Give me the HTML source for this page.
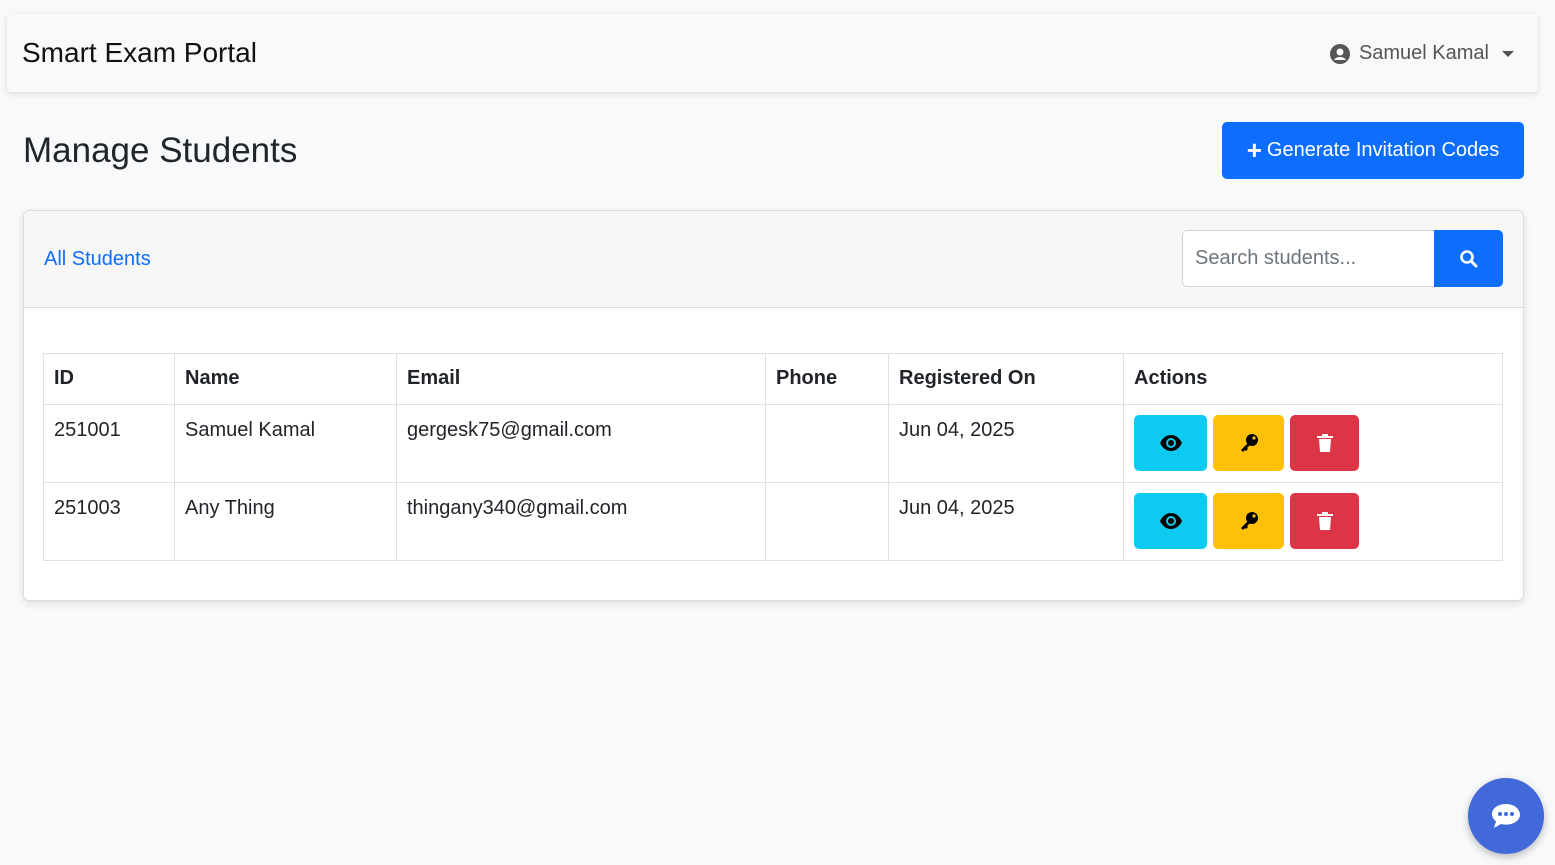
<!DOCTYPE html>
<html><head><meta charset="utf-8"><style>
*{box-sizing:border-box;margin:0;padding:0}
body{width:1555px;height:865px;background:#f8f9fa;font-family:"Liberation Sans",sans-serif;color:#212529;position:relative;overflow:hidden}
.nav{position:absolute;left:7px;top:14px;width:1531px;height:78px;background:#f8f9fa;box-shadow:0 2px 6px rgba(0,0,0,.12);border-radius:4px}
.brand{position:absolute;left:15px;top:23px;font-size:28px;color:#111}
.user{position:absolute;right:24px;top:28px;font-size:20px;color:#555;display:flex;align-items:center;gap:9px}
h1{position:absolute;left:23px;top:131px;font-size:35px;font-weight:500;color:#212529}
.gen{position:absolute;left:1222px;top:122px;width:302px;height:57px;background:#0d6efd;color:#fff;border-radius:5px;font-size:20px;display:flex;align-items:center;justify-content:center}
.card{position:absolute;left:23px;top:210px;width:1501px;height:391px;background:#fff;border:1px solid #dcdcdc;border-radius:6px;box-shadow:0 3px 8px rgba(0,0,0,.1);overflow:hidden}
.ch{height:97px;background:#f7f7f7;border-bottom:1px solid #dcdcdc;position:relative}
.ch a{position:absolute;left:20px;top:37px;color:#0d6efd;font-size:20px;font-weight:500}
.inp{position:absolute;left:1158px;top:19px;width:253px;height:57px;border:1px solid #ced4da;border-radius:5px 0 0 5px;background:#fff;color:#6c757d;font-size:20px;padding:16px 12px}
.sb{position:absolute;left:1410px;top:19px;width:69px;height:57px;background:#0d6efd;border-radius:0 5px 5px 0;display:flex;align-items:center;justify-content:center}
table{position:absolute;left:19px;top:142px;border-collapse:collapse;width:1460px;font-size:20px}
td,th{border:1px solid #dee2e6;text-align:left;vertical-align:top;padding:13px 10px}
th{height:51px;font-weight:bold}
td{height:78px;padding:14px 10px 0}
tr.r td{height:78px}
.b{display:inline-flex;align-items:center;justify-content:center;height:56px;border-radius:5px;margin-right:6px;vertical-align:top;margin-top:-4px}
.chat{position:absolute;left:1468px;top:778px;width:76px;height:76px;border-radius:50%;background:#4169d9;box-shadow:0 3px 8px rgba(0,0,0,.25);display:flex;align-items:center;justify-content:center}
</style></head><body>
<div class="nav"><div class="brand">Smart Exam Portal</div>
<div class="user"><svg width="20" height="20" viewBox="0 0 20 20"><circle cx="10" cy="10" r="10" fill="#555"/><circle cx="10" cy="8" r="3.5" fill="#f8f9fa"/><path d="M4 16c2-4 10-4 12 0" fill="#f8f9fa"/></svg>Samuel Kamal <svg width="12" height="8" viewBox="0 0 12 8" style="margin-left:4px"><path d="M0 1h12L6 7z" fill="#555"/></svg></div></div>
<h1>Manage Students</h1>
<div class="gen"><b style="font-size:26px;margin-right:5px;font-weight:bold">+</b>Generate Invitation Codes</div>
<div class="card"><div class="ch"><a>All Students</a><div class="inp">Search students...</div><div class="sb"><svg width="20" height="20" viewBox="0 0 20 20"><circle cx="8" cy="8" r="5.5" stroke="#fff" stroke-width="2.6" fill="none"/><path d="M12 12l5 5" stroke="#fff" stroke-width="3" stroke-linecap="round"/></svg></div></div>
<table>
<tr><th style="width:131px">ID</th><th style="width:222px">Name</th><th style="width:369px">Email</th><th style="width:123px">Phone</th><th style="width:235px">Registered On</th><th>Actions</th></tr>
<tr class="r"><td>251001</td><td>Samuel Kamal</td><td>gergesk75@gmail.com</td><td></td><td>Jun 04, 2025</td><td>BTN</td></tr>
<tr class="r"><td>251003</td><td>Any Thing</td><td>thingany340@gmail.com</td><td></td><td>Jun 04, 2025</td><td>BTN</td></tr>
</table></div>
<div class="chat"><svg width="32" height="28" viewBox="0 0 32 28"><path d="M16 2C8 2 2 6.5 2 12c0 3 1.6 5.5 4 7.3L4 26l7-4c1.6.4 3.2.6 5 .6 8 0 14-4.5 14-10S24 2 16 2z" fill="#fff"/><circle cx="10" cy="12" r="2" fill="#4169d9"/><circle cx="16" cy="12" r="2" fill="#4169d9"/><circle cx="22" cy="12" r="2" fill="#4169d9"/></svg></div>
<script>
var h='<span class="b" style="width:73px;background:#0dcaf0"><svg width="24" height="18" viewBox="0 0 24 18"><path d="M1 9C4 3 8 1 12 1s8 2 11 8c-3 6-7 8-11 8S4 15 1 9z" fill="#000"/><circle cx="12" cy="9" r="5" fill="#0dcaf0"/><circle cx="12" cy="9" r="3" fill="#000"/></svg></span><span class="b" style="width:71px;background:#ffc107"><svg width="22" height="22" viewBox="0 0 22 22"><circle cx="14" cy="8" r="6" fill="#000"/><circle cx="16" cy="6" r="1.6" fill="#ffc107"/><path d="M10 11L3 18l2 2 2-2 1 1 2-2-1-1 3-3z" fill="#000"/></svg></span><span class="b" style="width:69px;background:#dc3545"><svg width="18" height="20" viewBox="0 0 18 20"><path d="M1 3h16v2H1zM6 1h6v2H6zM3 6h12l-1 13H4z" fill="#fff"/></svg></span>';
document.querySelectorAll('td').forEach(function(t){if(t.textContent=='BTN')t.innerHTML=h;});
</script>
</body></html>
